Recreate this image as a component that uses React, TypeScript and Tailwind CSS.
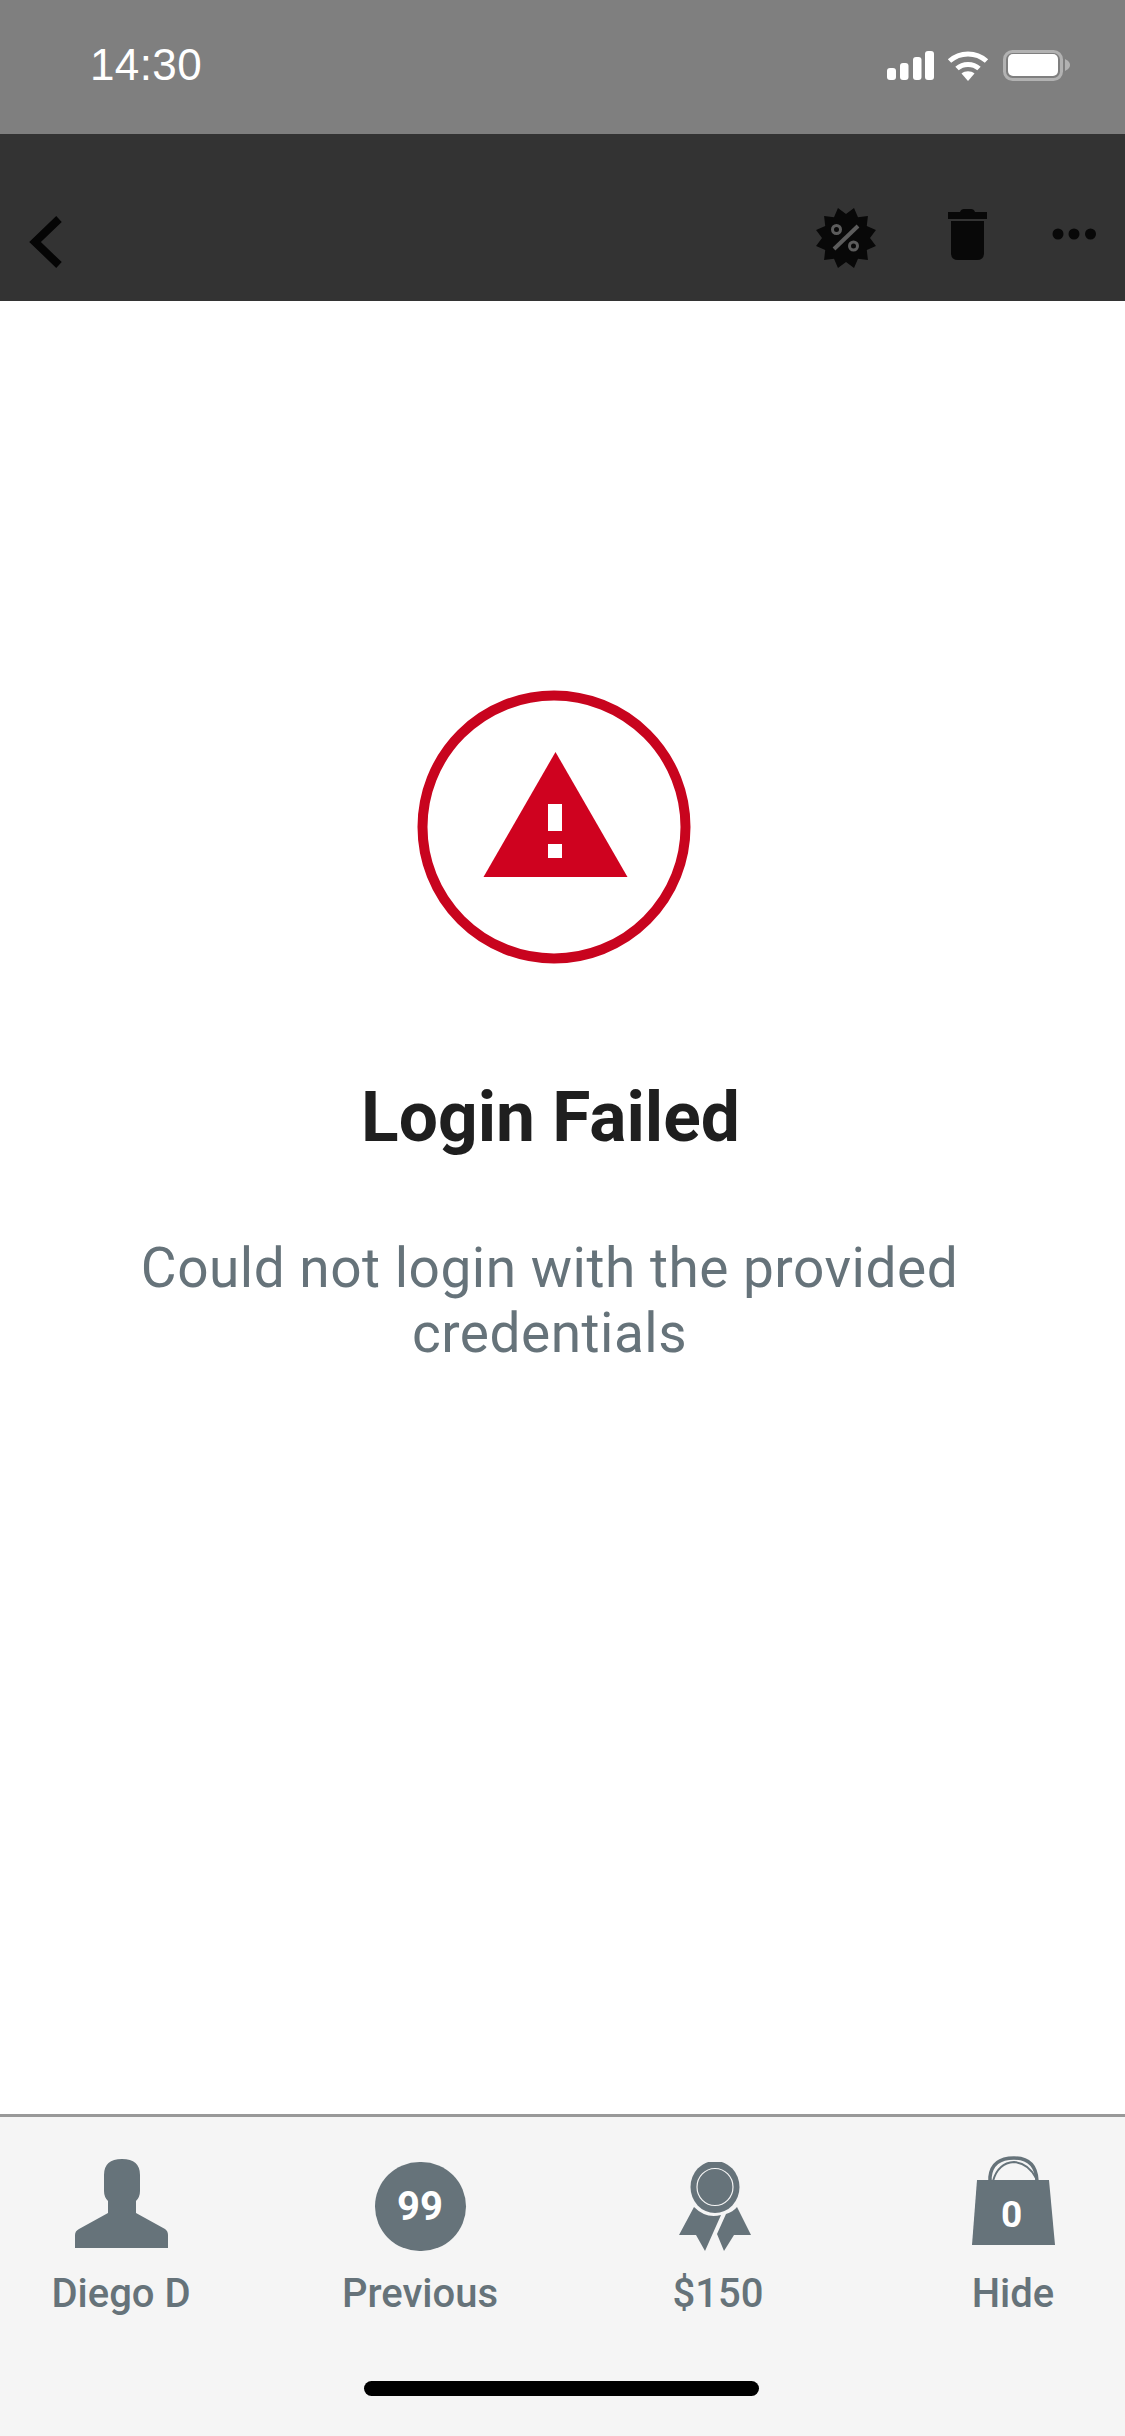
import React from "react";

const starPoints = (() => {
  const pts: string[] = [];
  for (let i = 0; i < 24; i++) {
    const a = (Math.PI * 2 * i) / 24 - Math.PI / 2 + Math.PI / 12;
    const r = i % 2 === 0 ? 31 : 24;
    pts.push(`${(31 + r * Math.cos(a)).toFixed(2)},${(30 + r * Math.sin(a)).toFixed(2)}`);
  }
  return pts.join(" ");
})();

function TabItem({ label, className, children }: { label: string; className?: string; children: React.ReactNode }) {
  return (
    <div className={`flex w-[200px] flex-col items-center ${className ?? ""}`}>
      <div className="flex h-[100px] w-full items-end justify-center">{children}</div>
      <div className="mt-[25px] text-[40px] leading-[47px] font-medium text-[#66737a]">{label}</div>
    </div>
  );
}

export default function App() {
  return (
    <div className="flex h-[2436px] w-[1125px] flex-col overflow-hidden bg-white font-['Roboto',sans-serif]">
      <div className="flex h-[134px] shrink-0 items-start justify-between bg-[#7f7f7f] pt-[50px] pr-[55px] pl-[90px]">
        <div className="font-['Liberation_Sans',sans-serif] text-[44px] leading-[30px] tracking-[0.4px] text-white">14:30</div>
        <div className="flex items-start">
          <svg width="47" height="31" viewBox="0 0 47 31" fill="#fff">
            <rect x="0" y="18" width="9" height="12" rx="3" />
            <rect x="13" y="13" width="8.5" height="17" rx="3" />
            <rect x="26" y="7" width="8.5" height="23" rx="3" />
            <rect x="38" y="1" width="9" height="29" rx="3" />
          </svg>
          <svg className="ml-[13px]" width="42" height="31" viewBox="0 0 42 31" fill="none" stroke="#fff">
            <path d="M2.5 11 C13 1.5 29 1.5 39.5 11" strokeWidth="5" />
            <path d="M10 18.5 C16 13 26 13 32 18.5" strokeWidth="5" />
            <path d="M14.5 23.5 C18 20.5 24 20.5 27.5 23.5 L21 31 Z" fill="#fff" stroke="none" />
          </svg>
          <svg className="ml-[14px]" width="67" height="31" viewBox="0 0 67 31" fill="none">
            <rect x="1.5" y="1.5" width="57" height="28" rx="8" stroke="#fff" strokeOpacity="0.4" strokeWidth="3" />
            <rect x="5" y="4" width="50" height="22" rx="5" fill="#fff" />
            <path d="M62 9 C66 11 67 13 67 15 C67 17 66 19 62 21 Z" fill="#fff" fillOpacity="0.4" />
          </svg>
        </div>
      </div>

      <div className="flex h-[167px] shrink-0 items-start justify-between bg-[#333333] pt-[74px] pr-[29px] pl-[28px]">
        <svg className="mt-[8px]" width="36" height="52" viewBox="0 0 36 52" fill="none" stroke="#050505">
          <path d="M31 3 L7 26 L31 49" strokeWidth="8" />
        </svg>
        <div className="flex items-start">
          <svg width="62" height="60" viewBox="0 0 62 60">
            <polygon points={starPoints} fill="#080808" />
            <circle cx="21.5" cy="21.5" r="4" fill="none" stroke="#5c5c5c" strokeWidth="3" />
            <circle cx="38.5" cy="38" r="4" fill="none" stroke="#5c5c5c" strokeWidth="3" />
            <path d="M43 18 L19 41" stroke="#5c5c5c" strokeWidth="4" />
          </svg>
          <svg className="ml-[71px] mt-[1px]" width="39" height="52" viewBox="0 0 39 52" fill="#080808">
            <path d="M0 3 H12 Q13 0 16 0 H23 Q26 0 27 3 H39 V10 H0 Z" />
            <path d="M3 12 H36 V44 Q36 51 29 51 H10 Q3 51 3 44 Z" />
          </svg>
          <svg className="ml-[65px] mt-[20px]" width="44" height="12" viewBox="0 0 44 12" fill="#080808">
            <circle cx="6" cy="6" r="5.5" />
            <circle cx="22" cy="6" r="5.5" />
            <circle cx="38.5" cy="6" r="5.5" />
          </svg>
        </div>
      </div>

      <main className="flex flex-1 flex-col items-center bg-white pt-[390px] pr-[18px]">
        <svg className="-mt-[1px]" width="274" height="274" viewBox="0 0 274 274">
          <circle cx="137" cy="137" r="131.5" fill="none" stroke="#c8041e" strokeWidth="10" />
          <path d="M138.5 62 L210.5 187 H66.5 Z" fill="#cf021f" />
          <rect x="131" y="114" width="14" height="27" fill="#fff" />
          <rect x="131" y="154" width="14" height="14" fill="#fff" />
        </svg>
        <h1 className="mt-[114px] -ml-[6px] w-[900px] text-center text-[69.5px] leading-[80px] font-bold text-[#1f1f1f]">Login Failed</h1>
        <p className="mt-[78px] -ml-[8px] w-[1000px] text-center text-[55px] leading-[65px] tracking-[0.5px] text-[#66737a]">
          Could not login with the provided
          <br />
          credentials
        </p>
      </main>

      <footer className="flex h-[322px] shrink-0 flex-col border-t-[3px] border-[#999999] bg-[#f5f5f5]">
        <div className="flex items-start pt-[28px] pl-[21px]">
          <TabItem label="Diego D">
            <svg className="mb-[-3px]" width="93" height="89" viewBox="0 0 93 89" fill="#66737a">
              <path d="M0 89 V76 Q0 72 4 70 L33 54 V42 Q29 38 29 32 V16 Q29 0 47 0 Q65 0 65 16 V32 Q65 38 61 42 V54 L90 70 Q93 72 93 76 V89 Z" />
            </svg>
          </TabItem>
          <TabItem label="Previous" className="ml-[99px]">
            <div className="mb-[-6px] flex h-[89px] w-[91px] items-center justify-center rounded-full bg-[#66737a] text-[40px] font-bold text-white">99</div>
          </TabItem>
          <TabItem label="$150" className="ml-[98px]">
            <svg className="mr-[6px] mb-[-6px]" width="72" height="89" viewBox="0 0 72 89" fill="#66737a">
              <ellipse cx="36" cy="25" rx="24.5" ry="26" />
              <ellipse cx="36" cy="25" rx="18" ry="18.5" fill="none" stroke="#f5f5f5" strokeWidth="1.2" />
              <path d="M15 45 Q27 57 42 53 L26 89 L17 73 H0 Z" />
              <path d="M58 45 Q54 50 47 52 L38 72 L45 89 L55 73 H72 Z" />
            </svg>
          </TabItem>
          <TabItem label="Hide" className="ml-[95px]">
            <div className="relative h-[89px] w-[83px]">
              <svg width="83" height="89" viewBox="0 0 83 89" fill="#66737a">
                <path d="M5 24 H77 L83 89 H0 Z" />
                <path d="M18 25 V21 Q20 2 42 2 Q64 2 65 25" fill="none" stroke="#66737a" strokeWidth="3.5" />
                <path d="M21 25 Q26 7 42 6 Q56 7 64 22" fill="none" stroke="#66737a" strokeWidth="2" />
              </svg>
              <span className="absolute inset-x-0 top-[37px] pr-[3px] text-center text-[37px] leading-[43px] font-bold text-white">0</span>
            </div>
          </TabItem>
        </div>
        <div className="mt-[64px] ml-[364px] h-[15px] w-[395px] rounded-full bg-black" />
      </footer>
    </div>
  );
}
